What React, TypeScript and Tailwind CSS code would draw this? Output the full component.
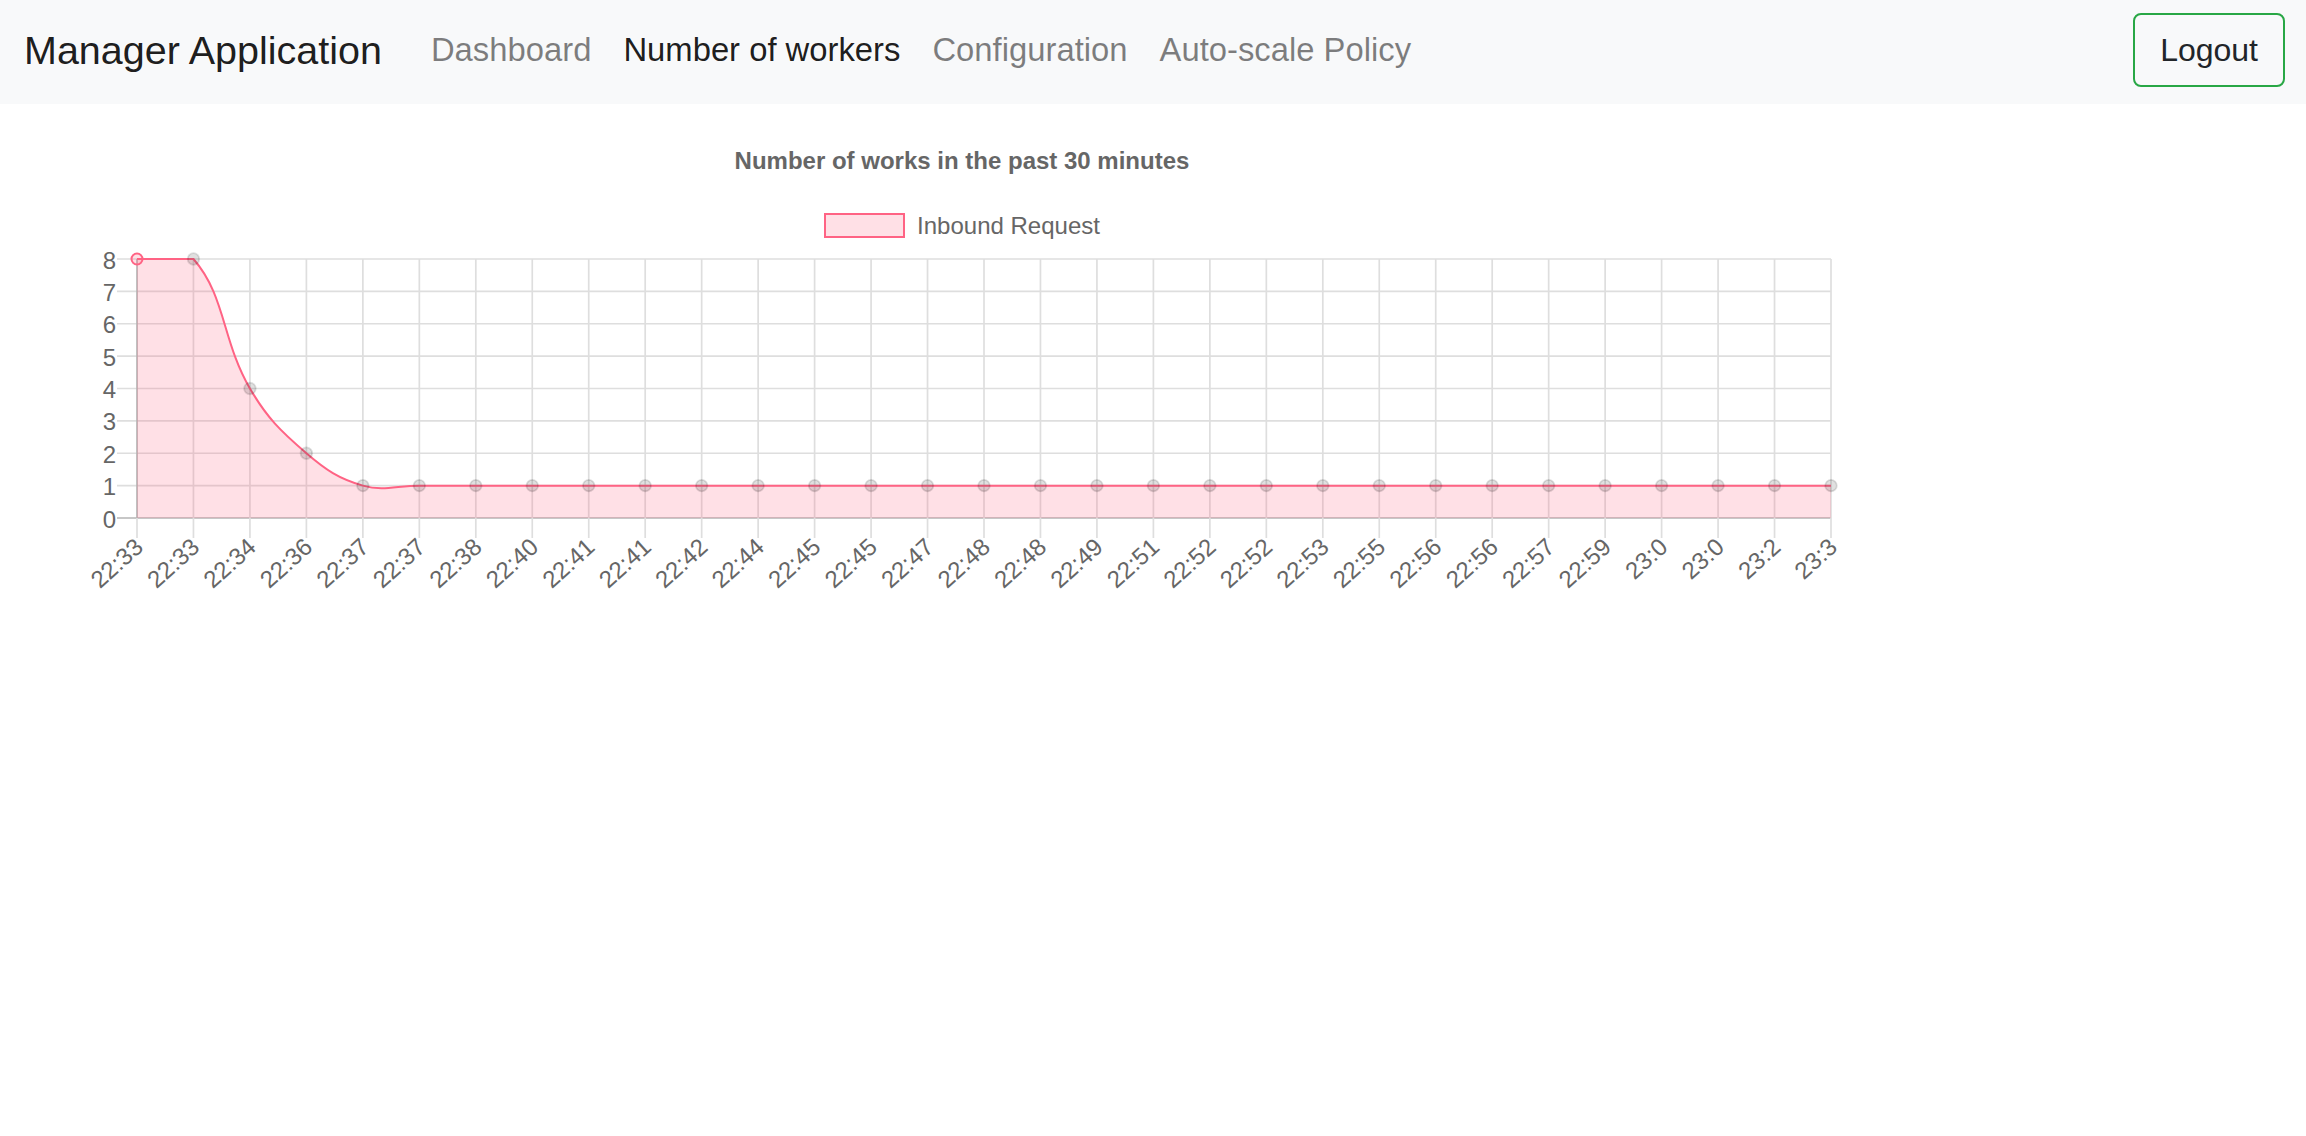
import React from "react";

const labels = [
  "22:33", "22:33", "22:34", "22:36", "22:37", "22:37", "22:38", "22:40", "22:41", "22:41",
  "22:42", "22:44", "22:45", "22:45", "22:47", "22:48", "22:48", "22:49", "22:51", "22:52",
  "22:52", "22:53", "22:55", "22:56", "22:56", "22:57", "22:59", "23:0", "23:0", "23:2", "23:3",
];
const values = [8, 8, 4, 2, 1, ...Array(26).fill(1)];

// page coordinates
const LEFT = 137;
const RIGHT = 1831;
const TOP = 259;
const BOTTOM = 518;
const SVG_TOP = 238;

type P = { x: number; y: number };

const xAt = (i: number) => LEFT + (i * (RIGHT - LEFT)) / (labels.length - 1);
const yAt = (v: number) => BOTTOM - (v * (BOTTOM - TOP)) / 8;

function buildPath(pts: P[], t = 0.4) {
  const clamp = (p: P): P => ({
    x: Math.min(Math.max(p.x, LEFT), RIGHT),
    y: Math.min(Math.max(p.y, TOP), BOTTOM),
  });
  const cps = pts.map((p, i) => {
    const prev = pts[i - 1] ?? p;
    const next = pts[i + 1] ?? p;
    const d01 = Math.hypot(p.x - prev.x, p.y - prev.y);
    const d12 = Math.hypot(next.x - p.x, next.y - p.y);
    let s01 = d01 / (d01 + d12);
    let s12 = d12 / (d01 + d12);
    if (isNaN(s01)) s01 = 0;
    if (isNaN(s12)) s12 = 0;
    const fa = t * s01;
    const fb = t * s12;
    return {
      prev: clamp({ x: p.x - fa * (next.x - prev.x), y: p.y - fa * (next.y - prev.y) }),
      next: clamp({ x: p.x + fb * (next.x - prev.x), y: p.y + fb * (next.y - prev.y) }),
    };
  });
  let d = `M ${pts[0].x} ${pts[0].y}`;
  for (let i = 1; i < pts.length; i++) {
    const a = cps[i - 1].next;
    const b = cps[i].prev;
    d += ` C ${a.x.toFixed(2)} ${a.y.toFixed(2)} ${b.x.toFixed(2)} ${b.y.toFixed(2)} ${pts[i].x.toFixed(2)} ${pts[i].y.toFixed(2)}`;
  }
  return d;
}

function Chart() {
  const pts: P[] = values.map((v, i) => ({ x: xAt(i), y: yAt(v) }));
  const line = buildPath(pts);
  const area = `${line} L ${RIGHT} ${BOTTOM} L ${LEFT} ${BOTTOM} Z`;
  const font = "'Liberation Sans', Arial, Helvetica, sans-serif";
  return (
    <svg width={1924} height={380} className="block" style={{ fontFamily: font }}>
      <g transform={`translate(0, ${-SVG_TOP})`}>
        {/* horizontal grid */}
        {Array.from({ length: 9 }, (_, v) => (
          <line
            key={`h${v}`}
            x1={117}
            x2={RIGHT}
            y1={yAt(v)}
            y2={yAt(v)}
            stroke={v === 0 ? "#b5b5b5" : "#dedede"}
            strokeWidth={1.7}
          />
        ))}
        {/* vertical grid */}
        {labels.map((_, i) => (
          <React.Fragment key={`v${i}`}>
            <line
              x1={xAt(i)}
              x2={xAt(i)}
              y1={TOP}
              y2={BOTTOM}
              stroke={i === 0 ? "#b5b5b5" : "#dedede"}
              strokeWidth={1.7}
            />
            <line x1={xAt(i)} x2={xAt(i)} y1={BOTTOM} y2={538} stroke="#dedede" strokeWidth={1.7} />
          </React.Fragment>
        ))}
        {/* y labels */}
        {Array.from({ length: 9 }, (_, v) => (
          <text key={`yl${v}`} x={116} y={yAt(v) + 9.5} textAnchor="end" fontSize={24} fill="#666">
            {v}
          </text>
        ))}
        {/* x labels */}
        {labels.map((l, i) => (
          <text
            key={`xl${i}`}
            transform={`translate(${xAt(i) + 2}, 543) rotate(-42)`}
            x={0}
            y={8.3}
            textAnchor="end"
            fontSize={24}
            fill="#666"
          >
            {l}
          </text>
        ))}
        {/* area + line */}
        <path d={area} fill="rgba(255,99,132,0.2)" />
        <path d={line} fill="none" stroke="#ff6384" strokeWidth={2} />
        {/* points */}
        {pts.map((p, i) =>
          i === 0 ? (
            <circle key={`p${i}`} cx={p.x} cy={p.y} r={5.5} fill="rgba(255,99,132,0.2)" stroke="#ff6384" strokeWidth={2} />
          ) : (
            <circle key={`p${i}`} cx={p.x} cy={p.y} r={5.8} fill="rgba(0,0,0,0.12)" stroke="rgba(0,0,0,0.12)" strokeWidth={1.8} />
          )
        )}
      </g>
    </svg>
  );
}

export default function App() {
  return (
    <div className="min-h-screen bg-white font-['Liberation_Sans',Arial,Helvetica,sans-serif]">
      <nav className="h-[104px] bg-[#f8f9fa] flex items-center pl-[24px] pr-[21px] pb-[4px]">
        <span className="text-[39.5px] leading-[60px] text-black/90 mr-[33px]">Manager Application</span>
        <a className="px-4 text-[32.8px] leading-[48px] text-black/50">Dashboard</a>
        <a className="px-4 text-[32.8px] leading-[48px] text-black/90">Number of workers</a>
        <a className="px-4 text-[32.8px] leading-[48px] text-black/50">Configuration</a>
        <a className="px-4 text-[32.8px] leading-[48px] text-black/50">Auto-scale Policy</a>
        <button className="ml-auto h-[74px] px-[25px] border-2 border-[#28a745] rounded-[8px] text-[32px] leading-[48px] text-[#212529] bg-transparent">
          Logout
        </button>
      </nav>
      <div className="w-[1924px]">
        <div className="mt-[45px] text-center text-[24px] leading-[24px] font-bold text-[#666]">
          Number of works in the past 30 minutes
        </div>
        <div className="mt-[40px] h-[25px] flex justify-center items-center gap-[12px]">
          <span className="block w-[81px] h-[25px] border-2 border-[#ff6384] bg-[#ffe0e6]" />
          <span className="text-[24px] leading-[24px] text-[#666]">Inbound Request</span>
        </div>
        <Chart />
      </div>
    </div>
  );
}
